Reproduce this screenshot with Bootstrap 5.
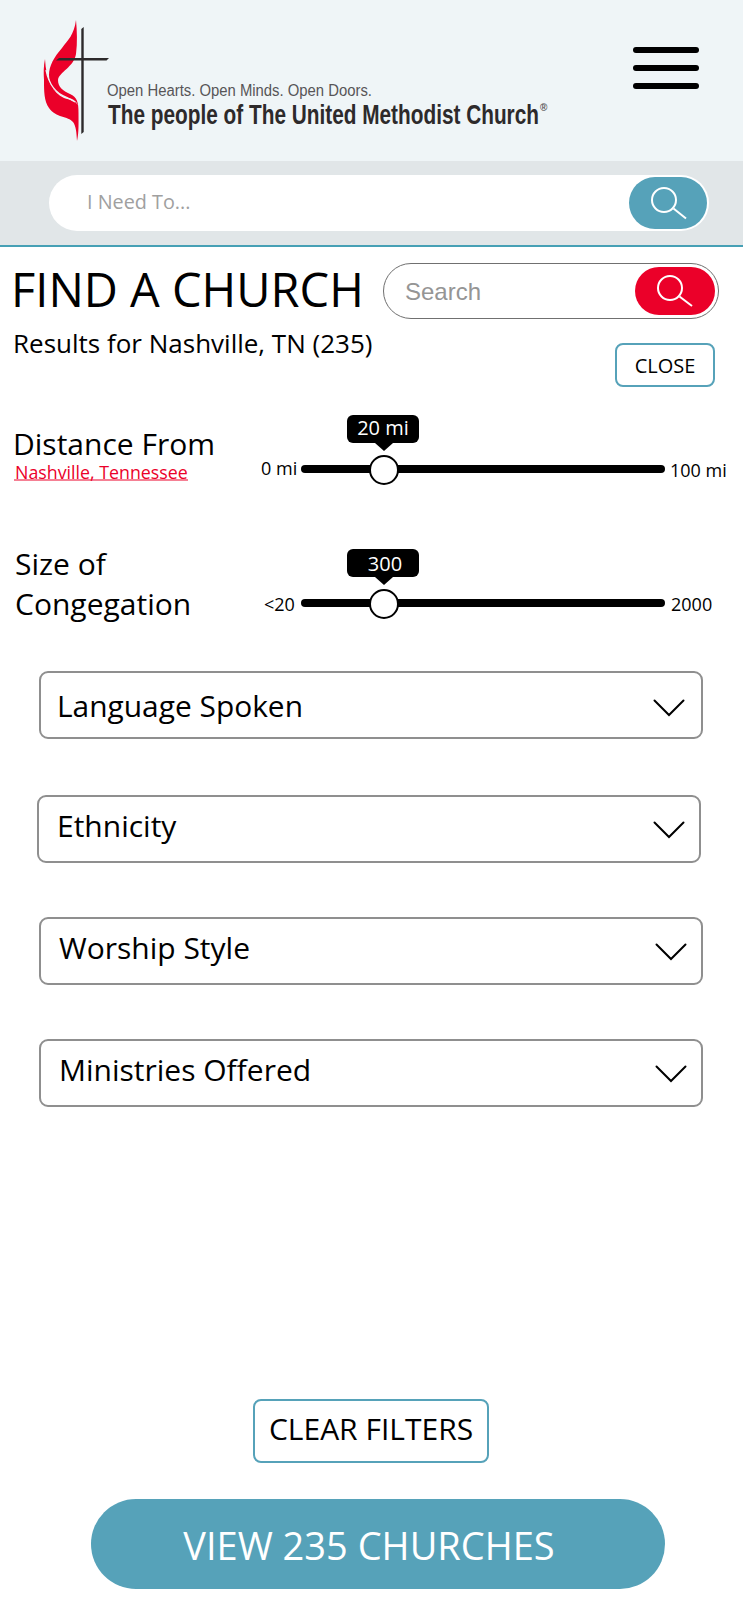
<!DOCTYPE html>
<html lang="en">
<head>
<meta charset="utf-8">
<meta name="viewport" content="width=device-width, initial-scale=1">
<title>Find a Church</title>
<link href="https://cdn.jsdelivr.net/npm/bootstrap@5.3.0/dist/css/bootstrap.min.css" rel="stylesheet">
<style>
  :root { --teal: #56a2b9; --brand-red: #eb0029; }
  body { font-family: "Open Sans", "Noto Sans", sans-serif; color: #000; background: #fff; overflow-x: hidden; }
  .site-header { height: 161px; background: #eff5f7; padding-right: 44px; }
  .logo { width: 560px; height: 161px; overflow: visible; }
  .burger { width: 66px; gap: 12px; padding: 47px 0 0; }
  .burger span { height: 6px; border-radius: 3px; background: #000; }
  .need-bar { height: 86px; background: #e1e6e8; border-bottom: 2px solid #46a0b5; padding: 14px 34px 0 49px; }
  .need-box { height: 56px; padding: 2px 2px 2px 38px; }
  .need-box span { font-size: 19.8px; color: #a0a0a0; line-height: 50px; }
  .btn-need { width: 78px; height: 52px; border-radius: 26px; background: var(--teal); }
  .btn-find { width: 80px; height: 48px; border-radius: 24px; background: var(--brand-red); }
  .title-area { height: 152px; padding: 0 24px 0 13px; }
  .page-title { font-size: 47px; line-height: 60px; margin: 12px 0 6px -2px; white-space: nowrap; font-weight: 400; }
  .results { font-size: 26px; line-height: 36px; margin: 0; white-space: nowrap; }
  .find-box { width: 336px; height: 56px; margin-top: 16px; border: 1px solid #707070; padding: 3px 3px 3px 21px; }
  .find-box span { font: 24px/49px "Liberation Sans", Arial, sans-serif; color: #959595; }
  .btn-line { border: 2px solid var(--teal); border-radius: 8px; background: #fff; color: #000; padding: 0; }
  .btn-close-panel { width: 100px; height: 44px; font-size: 20px; line-height: 41px; margin: 24px 4px 0 0; }
  .slider-row { height: 134px; }
  .slider-label { width: 261px; padding-left: 13px; font-size: 30px; white-space: nowrap; }
  .label-distance { padding-top: 28px; line-height: 34px; }
  .label-distance a { display: block; width: max-content; padding-left: 1px; margin: -1px 0 0 1px; font-size: 17.8px; line-height: 24px; color: var(--brand-red); text-decoration: none; background: linear-gradient(#f58094, #f58094) 0 19px / 100% 2px no-repeat; }
  .label-size { padding: 11px 0 0 15px; line-height: 40px; }
  .edge-text { font-size: 18px; line-height: 24px; white-space: nowrap; padding-top: 59px; }
  .edge-min { width: 40px; }
  .edge-max { padding-left: 5px; }
  .track { width: 364px; height: 8px; margin-top: 66px; border-radius: 4px; background: #000; }
  .knob { position: absolute; top: -10px; width: 30px; height: 30px; margin-left: -15px; border: 2px solid #000; border-radius: 50%; background: #fff; }
  .tip { position: absolute; top: -50px; width: 72px; height: 28px; margin-left: -37px; border-radius: 6px; background: #000; color: #fff; font-size: 20px; line-height: 25px; text-align: center; }
  .tip-low { line-height: 29px; padding-left: 4px; }
  .tip::after { content: ""; position: absolute; left: 28px; top: 28px; border: 9px solid transparent; border-top: 8px solid #000; border-bottom: 0; }
  .filters { padding: 4px 40px 0 39px; }
  .filter-box { height: 68px; width: 664px; border: 2px solid #8f8f8f; border-radius: 9px; background: #fff; color: #000; font-size: 30px; line-height: 40px; padding: 9px 14px 0 18px; margin-bottom: 54px; text-align: left; }
  .filter-first { padding: 13px 16px 0 16px; margin-bottom: 56px; font-size: 29.900px; }
  .filter-wide { margin-left: -2px; padding-left: 18px; }
  .filter-box svg { margin-top: 15px; }
  .filter-first svg { margin-top: 13px; }
  .footer-actions { padding-top: 238px; }
  .btn-clear { width: 236px; height: 64px; font-size: 30px; line-height: 56px; padding-bottom: 4px; margin-left: 253px; white-space: nowrap; }
  .btn-view { width: 574px; height: 90px; border: 0; border-radius: 45px; background: var(--teal); color: #fff; font-size: 38px; line-height: 92px; margin: 36px 0 0 91px; padding: 0 18px 0 0; }
</style>
</head>
<body>
<header class="site-header d-flex justify-content-between align-items-start">
  <svg class="logo" viewBox="0 0 560 161" role="img" aria-label="The United Methodist Church">
    <path fill="#eb0029" d="M76 20C74 35 68 40 62 48C54 57 49 66 49 75C49 88 58 95 69 98C74 99.500 77 102 77.500 105C75 100 70 100 64 98C53 93 46 80 45 59C43.500 66 43.500 73 44 80C44 91 44 101 49 108C56 118 68 116 73 122C76 126 76.500 132 77 141C79 133 78.500 122 78.500 113C78.500 102 77 97 70 94C63 91 58 87 58 80C59 72 74 67 76 54C77.500 43 77 31 76 20Z"/>
    <path fill="none" stroke="#eff5f7" stroke-width="1.300" d="M46 70C49 85 57 94 66 97L75 102"/>
    <path fill="#2d2a2b" d="M81.300 29L83.700 27V132L81.300 134ZM59 58H109L106.500 60.500H56Z"/>
    <g fill="#2d2a2b" font-family="'Liberation Sans Narrow','Liberation Sans',sans-serif">
      <text x="107" y="95.500" font-size="16" fill="#575557" textLength="265" lengthAdjust="spacingAndGlyphs">Open Hearts. Open Minds. Open Doors.</text>
      <text x="108" y="123.500" font-size="27.500" font-weight="700" textLength="431" lengthAdjust="spacingAndGlyphs">The people of The United Methodist Church</text>
      <text x="540" y="111" font-size="10" font-weight="700" fill="#575557">®</text>
    </g>
  </svg>
  <div class="burger d-flex flex-column" role="button" aria-label="Menu"><span></span><span></span><span></span></div>
</header>

<div class="need-bar">
  <div class="need-box bg-white rounded-pill d-flex justify-content-between">
    <span>I Need To...</span>
    <button class="btn-need border-0 p-0 d-flex" aria-label="Search"><svg width="78" height="52" fill="none" stroke="#fff" stroke-width="2"><circle cx="35" cy="23" r="12"/><path d="M44.500 31.500L57 41.500"/></svg></button>
  </div>
</div>

<main>
  <section class="title-area d-flex justify-content-between align-items-start">
    <div>
      <h1 class="page-title">FIND A CHURCH</h1>
      <p class="results">Results for Nashville, TN (235)</p>
    </div>
    <div class="d-flex flex-column align-items-end">
      <div class="find-box rounded-pill d-flex justify-content-between">
        <span>Search</span>
        <button class="btn-find border-0 p-0 d-flex" aria-label="Search"><svg width="80" height="48" fill="none" stroke="#fff" stroke-width="2"><circle cx="35" cy="21" r="12"/><path d="M44.500 29.500L57 39"/></svg></button>
      </div>
      <button class="btn-line btn-close-panel">CLOSE</button>
    </div>
  </section>

  <section class="slider-row d-flex align-items-start">
    <div class="slider-label label-distance flex-shrink-0">Distance From<a href="#">Nashville, Tennessee</a></div>
    <div class="edge-text edge-min flex-shrink-0" style="padding-top:57px">0 mi</div>
    <div class="track position-relative flex-shrink-0"><div class="tip" style="left:22.800%">20 mi</div><div class="knob" style="left:22.800%"></div></div>
    <div class="edge-text edge-max">100 mi</div>
  </section>
  <section class="slider-row d-flex align-items-start">
    <div class="slider-label label-size flex-shrink-0">Size of<br>Congegation</div>
    <div class="edge-text edge-min flex-shrink-0" style="padding-left:3px">&lt;20</div>
    <div class="track position-relative flex-shrink-0"><div class="tip tip-low" style="left:22.800%">300</div><div class="knob" style="left:22.800%"></div></div>
    <div class="edge-text edge-max" style="padding-left:6px">2000</div>
  </section>

  <section class="filters d-flex flex-column">
    <button class="filter-box filter-first d-flex justify-content-between align-items-start">Language Spoken<svg width="32" height="18" fill="none" stroke="#000" stroke-width="2" stroke-linecap="round"><path d="M1.500 1.500L16 16L30.500 1.500"/></svg></button>
    <button class="filter-box filter-wide d-flex justify-content-between align-items-start">Ethnicity<svg width="32" height="18" fill="none" stroke="#000" stroke-width="2" stroke-linecap="round"><path d="M1.500 1.500L16 16L30.500 1.500"/></svg></button>
    <button class="filter-box d-flex justify-content-between align-items-start">Worship Style<svg width="32" height="18" fill="none" stroke="#000" stroke-width="2" stroke-linecap="round"><path d="M1.500 1.500L16 16L30.500 1.500"/></svg></button>
    <button class="filter-box d-flex justify-content-between align-items-start">Ministries Offered<svg width="32" height="18" fill="none" stroke="#000" stroke-width="2" stroke-linecap="round"><path d="M1.500 1.500L16 16L30.500 1.500"/></svg></button>
  </section>

  <section class="footer-actions">
    <button class="btn-line btn-clear d-block">CLEAR FILTERS</button>
    <button class="btn-view d-block">VIEW 235 CHURCHES</button>
  </section>
</main>
<script src="https://cdn.jsdelivr.net/npm/bootstrap@5.3.0/dist/js/bootstrap.bundle.min.js"></script>
</body>
</html>
